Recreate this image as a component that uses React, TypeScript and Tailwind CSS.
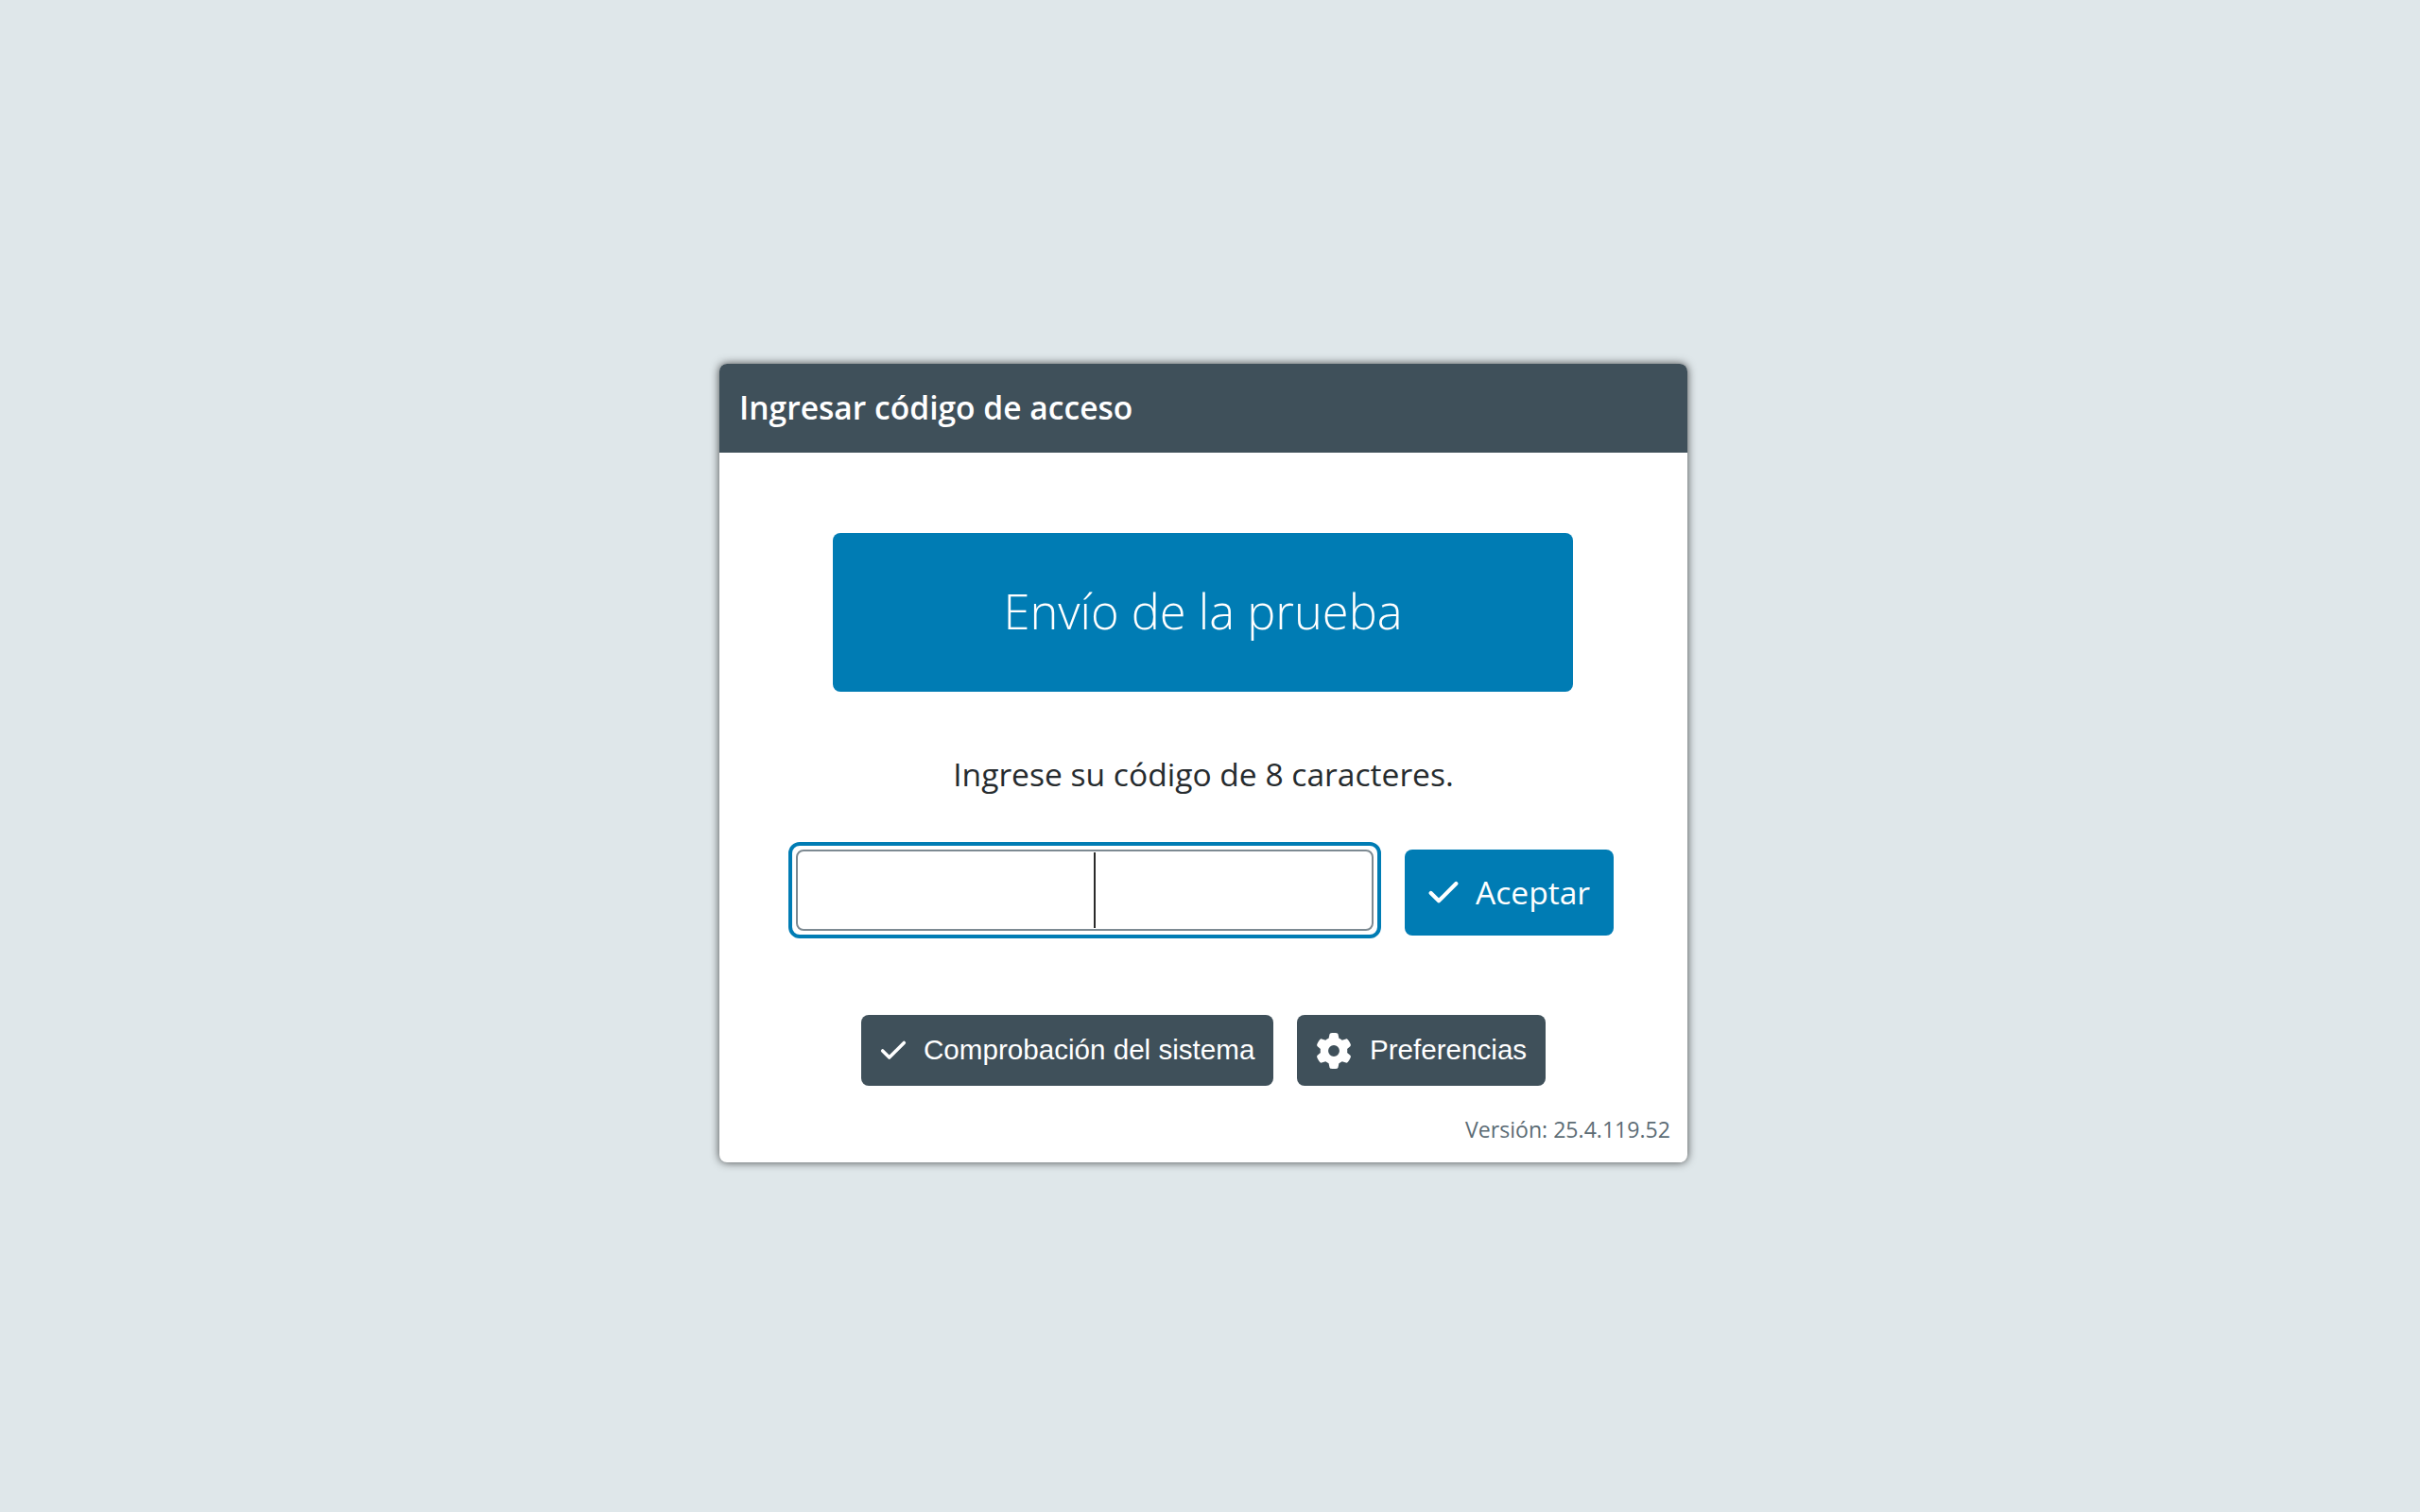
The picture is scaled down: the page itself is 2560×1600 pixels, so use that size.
import { Check } from 'lucide-react'
import { FaGear } from 'react-icons/fa6'

function App() {
  return (
    <div className="h-[1600px] bg-[#dfe7ea] flex justify-center items-start pt-[385px] pr-[14px] font-['Open_Sans',sans-serif]">
      <div className="w-[1024px] h-[845px] bg-white rounded-[8px] shadow-[0_0_10px_rgba(0,0,0,0.7)] flex flex-col overflow-hidden">
        <div className="h-[94px] shrink-0 bg-[#3f505a] px-[21px] pb-[2px] flex items-center">
          <h1 className="text-[33.6px] font-semibold text-white">Ingresar código de acceso</h1>
        </div>

        <div className="flex flex-col items-center pt-[85px]">
          <div className="w-[783px] h-[168px] ml-[-1px] pb-[2px] bg-[#007cb4] rounded-[8px] flex items-center justify-center">
            <span className="text-[50.6px] font-light text-white">Envío de la prueba</span>
          </div>

          <p className="mt-[63px] h-[48px] leading-[48px] text-[33.6px] text-[#262b2e]">Ingrese su código de 8 caracteres.</p>

          <div className="mt-[48px] flex items-start w-[873px] ml-[-5px]">
            <div className="relative w-[627px] h-[102px] border-[4px] border-[#007cb4] rounded-[12px] p-[4px] shrink-0">
              <input
                readOnly
                aria-label="Código de acceso"
                className="w-full h-full border-2 border-[#7d8a92] rounded-[8px] bg-white outline-none"
              />
              <div className="absolute left-[319px] top-[7px] w-[2px] h-[80px] bg-[#2a2a2a]" />
            </div>
            <button className="ml-[25px] mt-[8px] w-[221px] h-[91px] pl-[21px] bg-[#007cb4] rounded-[8px] text-white text-[33.6px] flex items-center gap-[14px] shrink-0">
              <Check className="w-[40px] h-[40px]" strokeWidth={2.5} />
              Aceptar
            </button>
          </div>

          <div className="mt-[81px] flex gap-[25px] font-['Liberation_Sans',sans-serif] text-[29.6px] text-white">
            <button className="w-[436px] h-[75px] pl-[17px] bg-[#3f505a] rounded-[8px] flex items-center gap-[15px]">
              <Check className="w-[34px] h-[34px]" strokeWidth={2.5} />
              Comprobación del sistema
            </button>
            <button className="w-[263px] h-[75px] pl-[20px] bg-[#3f505a] rounded-[8px] flex items-center gap-[19px]">
              <FaGear className="w-[38px] h-[38px]" />
              Preferencias
            </button>
          </div>

          <p className="self-end mt-[29px] mr-[18px] text-[23.1px] leading-[34px] text-[#5c6c75]">Versión: 25.4.119.52</p>
        </div>
      </div>
    </div>
  )
}

export default App
